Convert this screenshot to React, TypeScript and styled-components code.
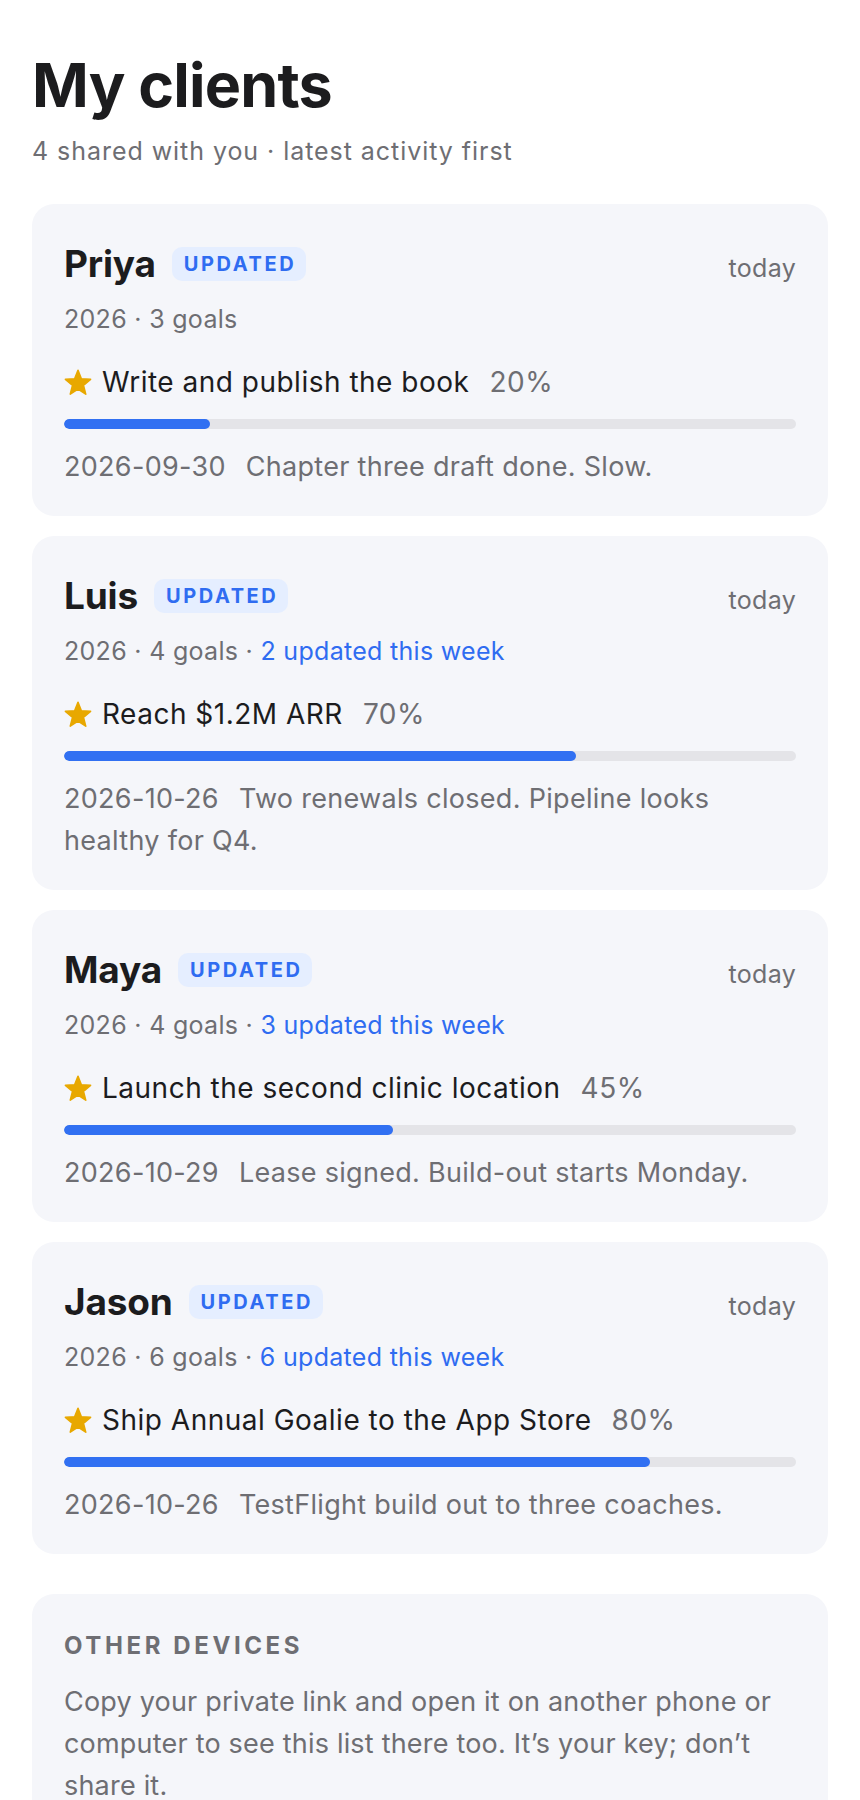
import * as React from 'react'
import styled, { createGlobalStyle } from 'styled-components'

const GlobalStyle = createGlobalStyle`
  html, body {
    margin: 0;
    padding: 0;
    background: #ffffff;
  }
  body {
    font-family: Inter, 'Noto Sans', 'Liberation Sans', sans-serif;
    color: #1c1c1e;
    -webkit-font-smoothing: antialiased;
  }
`

const Page = styled.main`
  padding: 52px 32px 40px;
`

const Title = styled.h1`
  margin: 0;
  font-size: 61px;
  line-height: 67px;
  font-weight: 700;
  letter-spacing: -0.8px;
  color: #1c1c1e;
`

const Subtitle = styled.p`
  margin: 16px 0 0;
  font-size: 25px;
  line-height: 32px;
  letter-spacing: 0.95px;
  color: #6e6e73;
`

const List = styled.div`
  display: flex;
  flex-direction: column;
  gap: 20px;
  margin-top: 37px;
`

const Card = styled.section`
  background: #f5f6fa;
  border-radius: 22px;
  padding: 38px 32px 28px;
`

const Header = styled.div`
  display: flex;
  align-items: baseline;
  justify-content: space-between;
`

const NameGroup = styled.div`
  display: flex;
  align-items: center;
  gap: 16px;
`

const Name = styled.h2`
  margin: 0;
  font-size: 37px;
  line-height: 44px;
  font-weight: 700;
  letter-spacing: -0.2px;
  color: #1c1c1e;
`

const Badge = styled.span`
  display: inline-flex;
  align-items: center;
  height: 34px;
  padding: 0 10px 0 12px;
  border-radius: 10px;
  background: #e5eeff;
  color: #2f6cf1;
  font-size: 20px;
  font-weight: 700;
  letter-spacing: 0.13em;
`

const When = styled.span`
  font-size: 25px;
  letter-spacing: 0.3px;
  color: #6e6e73;
`

const Meta = styled.div`
  margin-top: 17px;
  font-size: 25px;
  line-height: 32px;
  letter-spacing: 0.3px;
  color: #6e6e73;
`

const Fresh = styled.span`
  color: #2f6cf1;
`

const GoalRow = styled.div`
  display: flex;
  align-items: center;
  gap: 10px;
  margin-top: 29px;
  font-size: 28px;
  line-height: 36px;
  letter-spacing: 0.5px;
`

const GoalTitle = styled.span`
  color: #1c1c1e;
`

const Percent = styled.span`
  margin-left: 10px;
  color: #6e6e73;
`

const Track = styled.div`
  margin-top: 19px;
  height: 10px;
  border-radius: 5px;
  background: #e4e4e8;
  overflow: hidden;
`

const Fill = styled.div`
  height: 100%;
  border-radius: 5px;
  background: #3170f2;
`

const Note = styled.p`
  margin: 17px 0 0;
  font-size: 27px;
  line-height: 42px;
  letter-spacing: 0.3px;
  color: #6e6e73;
`

const NoteDate = styled.span`
  margin-right: 20px;
`

const InfoCard = styled(Card)`
  margin-top: 40px;
  padding-top: 37px;
`

const InfoLabel = styled.h3`
  margin: 0;
  font-size: 24px;
  line-height: 30px;
  font-weight: 700;
  letter-spacing: 0.15em;
  color: #6e6e73;
`

const InfoText = styled.p`
  margin: 20px 0 0;
  font-size: 27px;
  line-height: 42px;
  letter-spacing: 0.2px;
  color: #6e6e73;
`

const Star = () => (
  <svg width="28" height="27" viewBox="0 0 24 23.4" aria-hidden>
    <polygon
      points="12,1.1 14.9,8.5 22.9,8.9 16.7,14.1 18.7,21.8 12,17.4 5.3,21.8 7.3,14.1 1.1,8.9 9.1,8.5"
      fill="#e8a800"
      stroke="#e8a800"
      strokeWidth="1.4"
      strokeLinejoin="round"
    />
  </svg>
)

type Client = {
  name: string
  goals: number
  updated: number
  goal: string
  pct: number
  date: string
  note: string
}

const clients: Client[] = [
  {
    name: 'Priya',
    goals: 3,
    updated: 0,
    goal: 'Write and publish the book',
    pct: 20,
    date: '2026-09-30',
    note: 'Chapter three draft done. Slow.',
  },
  {
    name: 'Luis',
    goals: 4,
    updated: 2,
    goal: 'Reach $1.2M ARR',
    pct: 70,
    date: '2026-10-26',
    note: 'Two renewals closed. Pipeline looks healthy for Q4.',
  },
  {
    name: 'Maya',
    goals: 4,
    updated: 3,
    goal: 'Launch the second clinic location',
    pct: 45,
    date: '2026-10-29',
    note: 'Lease signed. Build-out starts Monday.',
  },
  {
    name: 'Jason',
    goals: 6,
    updated: 6,
    goal: 'Ship Annual Goalie to the App Store',
    pct: 80,
    date: '2026-10-26',
    note: 'TestFlight build out to three coaches.',
  },
]

const ClientCard = ({ client }: { client: Client }) => (
  <Card>
    <Header>
      <NameGroup>
        <Name>{client.name}</Name>
        <Badge>UPDATED</Badge>
      </NameGroup>
      <When>today</When>
    </Header>
    <Meta>
      2026 · {client.goals} goals
      {client.updated > 0 && (
        <>
          {' · '}
          <Fresh>{client.updated} updated this week</Fresh>
        </>
      )}
    </Meta>
    <GoalRow>
      <Star />
      <GoalTitle>{client.goal}</GoalTitle>
      <Percent>{client.pct}%</Percent>
    </GoalRow>
    <Track>
      <Fill style={{ width: `${client.pct}%` }} />
    </Track>
    <Note>
      <NoteDate>{client.date}</NoteDate>
      {client.note}
    </Note>
  </Card>
)

const App = () => (
  <>
    <GlobalStyle />
    <Page>
      <Title>My clients</Title>
      <Subtitle>4 shared with you · latest activity first</Subtitle>
      <List>
        {clients.map((c) => (
          <ClientCard key={c.name} client={c} />
        ))}
      </List>
      <InfoCard>
        <InfoLabel>OTHER DEVICES</InfoLabel>
        <InfoText>
          Copy your private link and open it on another phone or computer to
          see this list there too. It’s your key; don’t share it.
        </InfoText>
      </InfoCard>
    </Page>
  </>
)

export default App
